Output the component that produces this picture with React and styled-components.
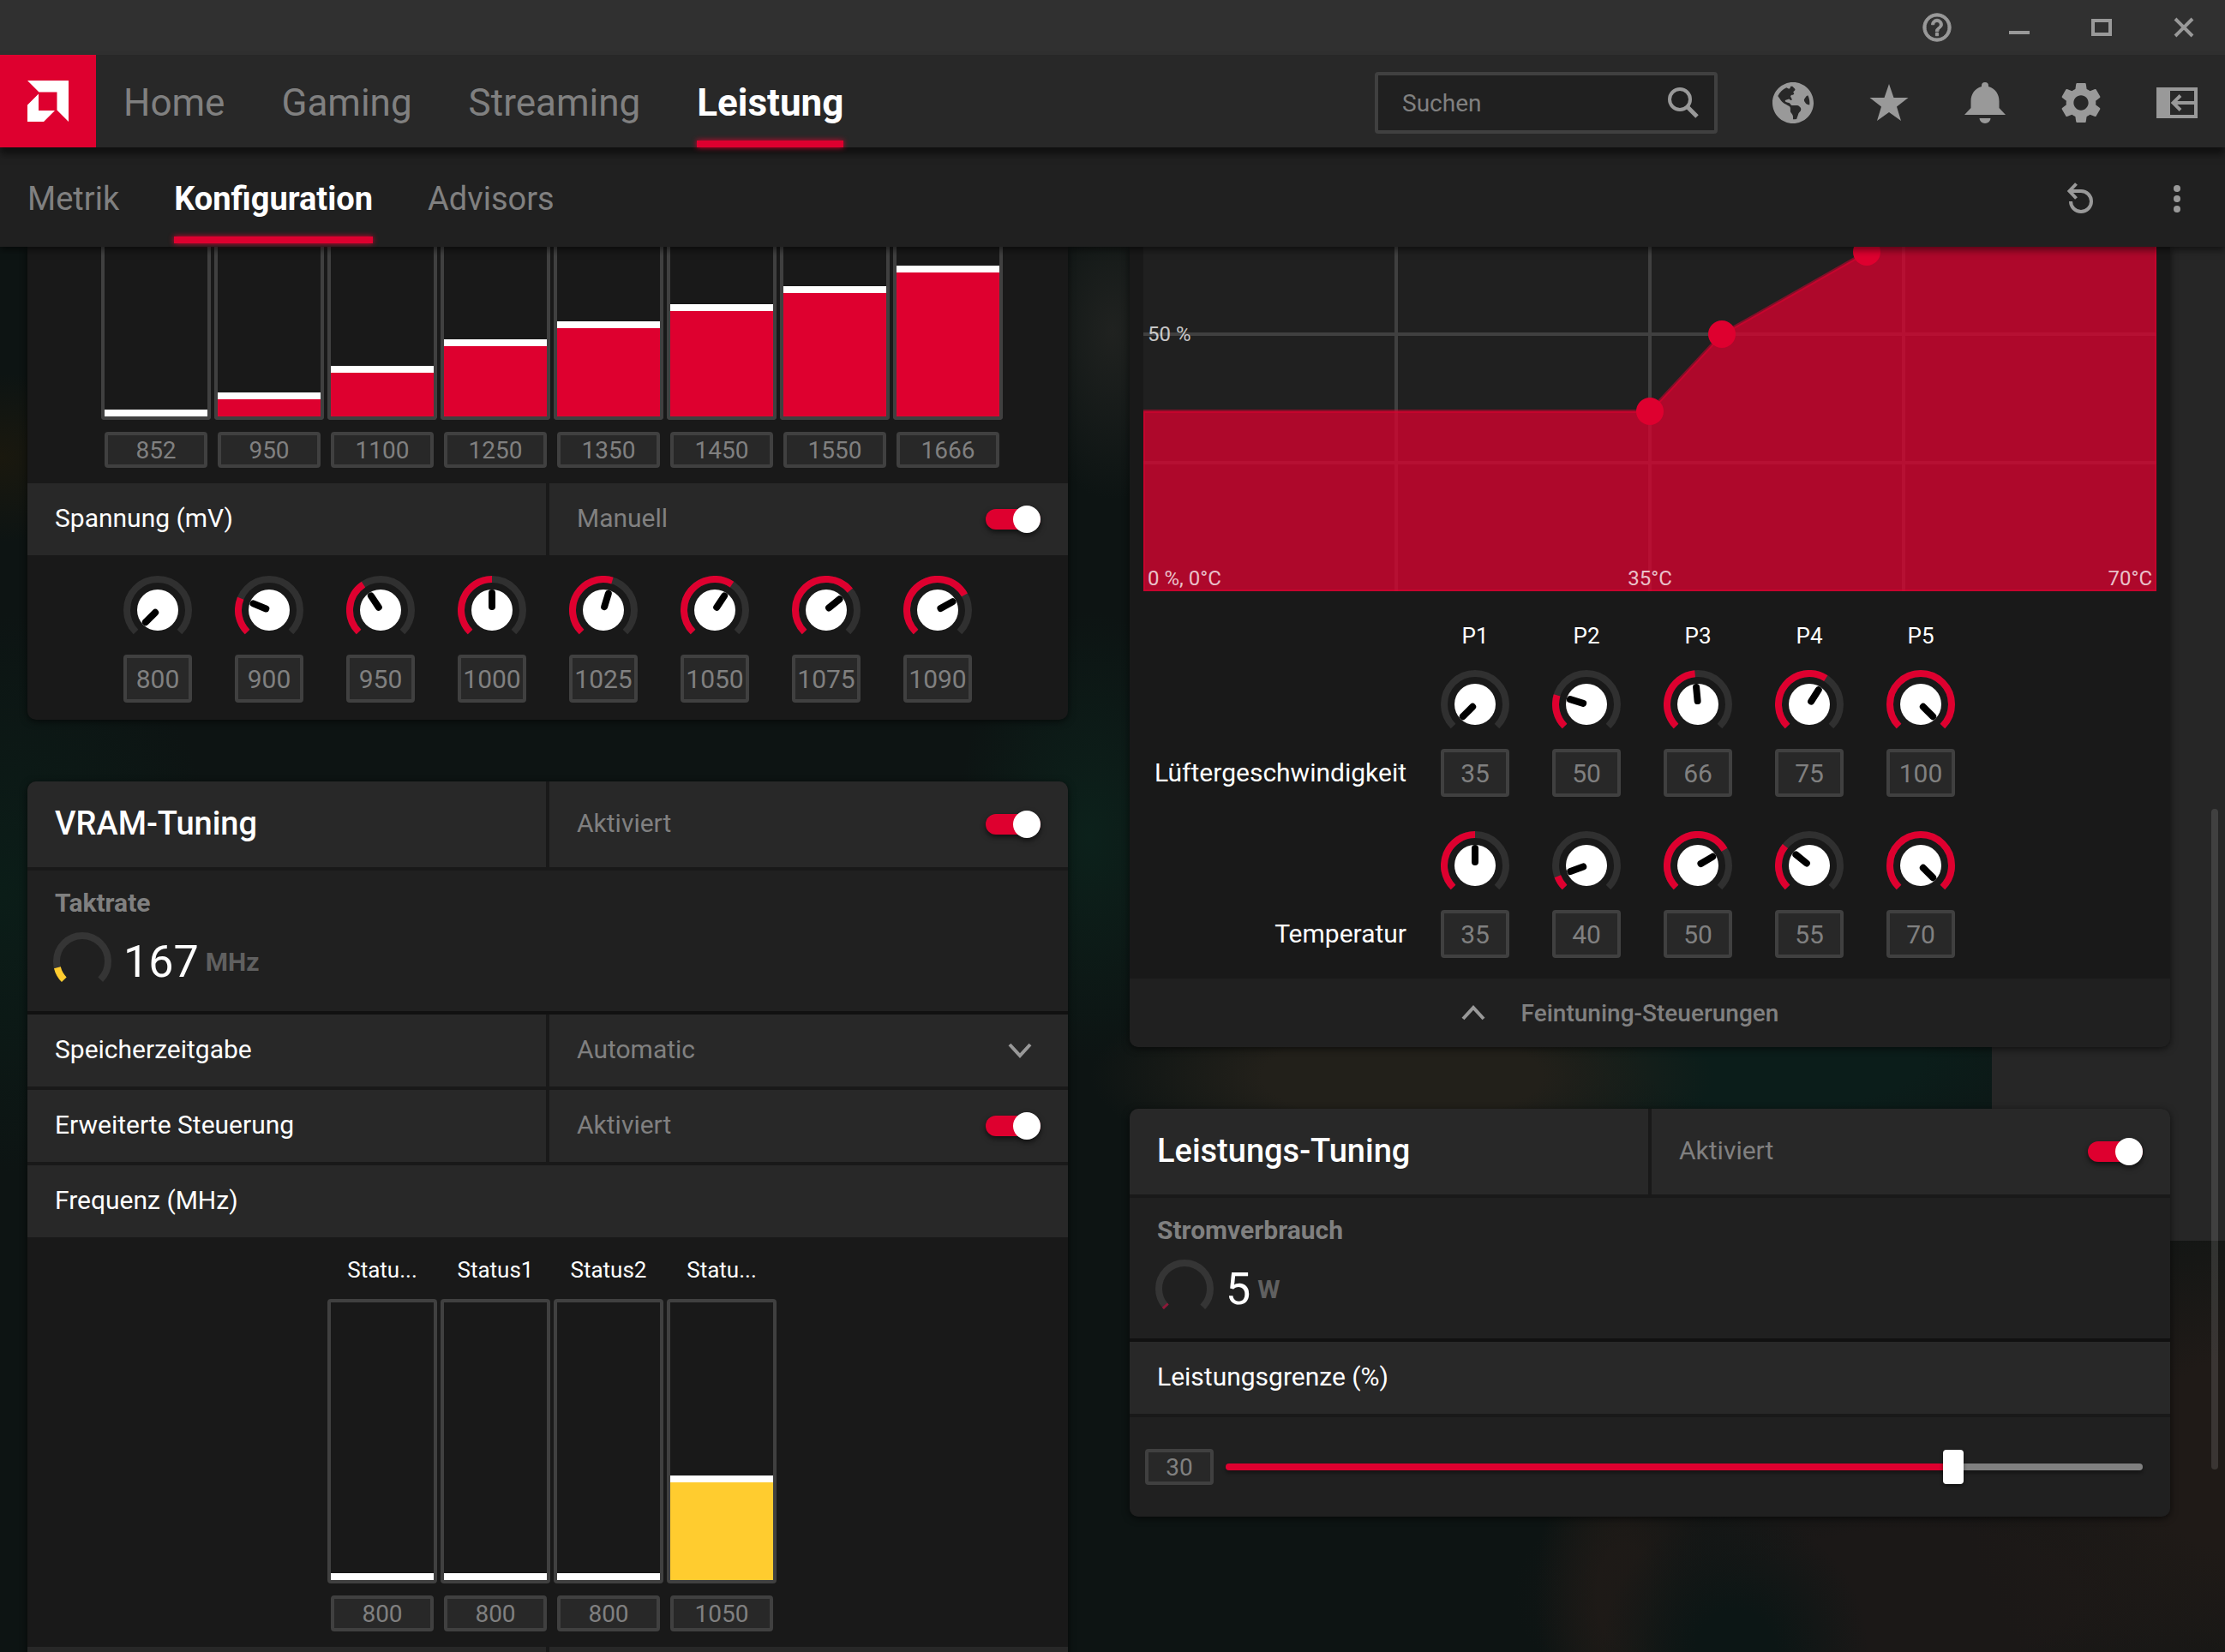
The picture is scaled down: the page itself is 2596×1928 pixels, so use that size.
import React, { useState } from "react";
import styled, { createGlobalStyle } from "styled-components";
import { FaGlobeAmericas } from "react-icons/fa";
import { MdHelpOutline, MdSettings } from "react-icons/md";

const RED = "#de002f";
const YELLOW = "#ffcc2f";

const GlobalStyle = createGlobalStyle`
  * {
    box-sizing: border-box;
  }
  body {
    margin: 0;
    background: #0e1514;
    color: #fff;
    font-family: Roboto, "Liberation Sans", sans-serif;
    font-size: 30px;
  }
  button, input, select {
    font: inherit;
    color: inherit;
    border: 0;
    padding: 0;
    margin: 0;
    background: none;
  }
`;

const Page = styled.div`
  height: 100vh;
  display: flex;
  flex-direction: column;
  overflow: hidden;
`;

const TitleBar = styled.div`
  height: 64px;
  flex: none;
  display: flex;
  justify-content: flex-end;
  align-items: center;
  gap: 48px;
  padding-right: 24px;
  background: #303030;
`;

const IconButton = styled.button`
  width: 48px;
  height: 48px;
  display: flex;
  align-items: center;
  justify-content: center;
  color: #999;
`;

const NavBar = styled.header`
  height: 108px;
  flex: none;
  display: flex;
  align-items: center;
  background: #282828;
  position: relative;
  z-index: 3;
  box-shadow: 0 8px 8px rgba(0, 0, 0, 0.5);
`;

const Logo = styled.a`
  width: 112px;
  height: 100%;
  display: flex;
  align-items: center;
  justify-content: center;
  background: ${RED};
`;

const NavLinks = styled.nav`
  height: 100%;
  flex: 1;
  display: flex;
  gap: ${(props) => (props.$small ? 64 : 66)}px;
  padding-left: 32px;
`;

const NavLink = styled.a`
  position: relative;
  display: flex;
  align-items: center;
  padding-top: 4px;
  color: ${(props) => (props.$active ? "#fff" : "#808080")};
  font-size: ${(props) => (props.$small ? 38 : 44)}px;
  font-weight: ${(props) => (props.$active ? 700 : 400)};
  text-decoration: none;

  &::after {
    content: "";
    display: ${(props) => (props.$active ? "block" : "none")};
    position: absolute;
    left: 0;
    right: 0;
    bottom: ${(props) => (props.$small ? 4 : 0)}px;
    height: 8px;
    background: ${RED};
    box-shadow: 0 0 6px ${RED};
  }
`;

const SearchBox = styled.label`
  width: 400px;
  height: 72px;
  margin-top: 4px;
  display: flex;
  align-items: center;
  padding: 0 18px 0 28px;
  border: 4px solid #404040;
  border-radius: 4px;
  background: #202020;
  color: #999;

  input {
    flex: 1;
    min-width: 0;
    font-size: 28px;
    outline: none;
  }
  input::placeholder {
    color: #808080;
  }
`;

const NavIcons = styled.div`
  display: flex;
  gap: 64px;
  margin-top: 4px;
  padding: 0 32px 0 64px;
`;

const SubNav = styled.div`
  height: 116px;
  flex: none;
  display: flex;
  align-items: center;
  background: #202020;
  position: relative;
  z-index: 2;
  box-shadow: 0 4px 8px rgba(0, 0, 0, 0.5);
`;

const Content = styled.main`
  flex: 1;
  min-height: 0;
  position: relative;
  display: grid;
  grid-template-columns: 1fr 1fr;
  align-items: start;
  gap: 72px;
  padding: 0 64px 0 32px;
  overflow: hidden;
  background:
    linear-gradient(#262626, #262626) right top / 64px 1160px no-repeat,
    linear-gradient(#262626, #262626) right 900px / 272px 260px no-repeat,
    radial-gradient(ellipse 6% 10% at 78% 100%, #0c1615 30%, transparent),
    radial-gradient(ellipse 12% 22% at 100% 86%, #1f1a17 30%, transparent),
    radial-gradient(ellipse 18% 12% at 86% 96%, #1b1817 40%, transparent),
    radial-gradient(ellipse 4% 12% at 73% 96%, #1f1b17 30%, transparent),
    radial-gradient(ellipse 14% 7% at 63% 59%, #22201a 45%, transparent),
    radial-gradient(ellipse 16% 8% at 80% 58%, #0b1d1a 40%, transparent),
    radial-gradient(ellipse 6% 16% at 49% 42%, #0c211b, transparent),
    radial-gradient(ellipse 4% 12% at 50% 6%, #202220, transparent),
    radial-gradient(ellipse 5% 6% at 0% 15%, #1a180e, transparent),
    radial-gradient(ellipse 10% 20% at 0% 46%, #0b1d18, transparent),
    #0d1413;
`;

const ScrollThumb = styled.div`
  position: absolute;
  right: 8px;
  top: 40%;
  width: 8px;
  height: 47%;
  border-radius: 4px;
  background: rgba(255, 255, 255, 0.12);
`;

const Column = styled.div`
  display: flex;
  flex-direction: column;
  gap: 72px;
`;

const Card = styled.section`
  display: flex;
  flex-direction: column;
  background: #191919;
  border-radius: ${(props) => (props.$cut ? "0 0 10px 10px" : "10px")};
  overflow: hidden;
  box-shadow: 0 2px 8px rgba(0, 0, 0, 0.6);
`;

const Row = styled.div`
  display: grid;
  grid-template-columns: ${(props) => (props.$single ? "1fr" : "1fr 1fr")};
  gap: 4px;
  height: ${(props) => (props.$head ? 100 : 84)}px;
  border-bottom: ${(props) => (props.$line ? "4px solid #191919" : "0")};
  box-sizing: content-box;
`;

const Cell = styled.div`
  display: flex;
  align-items: center;
  justify-content: space-between;
  padding: 0 32px;
  background: #282828;
`;

const CellText = styled.span`
  padding-bottom: 4px;
  color: ${(props) => (props.$muted ? "#808080" : "#fff")};
`;

const CardTitle = styled.h2`
  margin: 0;
  padding-bottom: 2px;
  font-size: 38px;
  font-weight: 500;
`;

const Switch = styled.input`
  appearance: none;
  display: grid;
  align-items: center;
  width: 64px;
  height: 32px;
  filter: drop-shadow(0 3px 3px rgba(0, 0, 0, 0.6));

  &::before,
  &::after {
    content: "";
    grid-area: 1 / 1;
  }
  &::before {
    height: 24px;
    border-radius: 12px;
    background: ${RED};
  }
  &::after {
    justify-self: end;
    width: 32px;
    height: 32px;
    border-radius: 50%;
    background: #fff;
  }
  &:not(:checked)::before {
    background: #555;
  }
  &:not(:checked)::after {
    justify-self: start;
  }
`;

const Select = styled.select`
  appearance: none;
  flex: 1;
  padding-bottom: 4px;
  color: #808080;
  outline: none;
`;

const ChevronBox = styled.span`
  width: 48px;
  display: flex;
  justify-content: center;
  pointer-events: none;
`;

const Metric = styled.div`
  padding: 20px 32px 26px;
  background: #202020;
  border-bottom: 4px solid #111;
`;

const MetricName = styled.div`
  line-height: 36px;
  margin-bottom: 18px;
  font-weight: 700;
  color: #808080;
`;

const MetricLine = styled.div`
  display: flex;
  align-items: center;
  height: 64px;

  svg {
    overflow: visible;
    margin-right: 16px;
  }
`;

const MetricValue = styled.span`
  font-size: 52px;
  margin-right: 8px;
`;

const MetricUnit = styled.span`
  font-size: 30px;
  font-weight: 700;
  color: #606060;
`;

const Bars = styled.div`
  display: flex;
  justify-content: center;
  gap: 4px;
  padding: ${(props) => (props.$cut ? 0 : 22)}px 0 18px 10px;
`;

const BarColumn = styled.div`
  width: 128px;
  display: flex;
  flex-direction: column;
  align-items: center;
`;

const BarLabel = styled.div`
  height: 32px;
  margin-bottom: 18px;
  line-height: 32px;
  font-size: 26px;
`;

const Track = styled.div`
  width: 100%;
  height: ${(props) => (props.$cut ? 202 : 332)}px;
  margin-bottom: 14px;
  display: flex;
  flex-direction: column;
  justify-content: flex-end;
  border: 4px solid #404040;
  border-top-width: ${(props) => (props.$cut ? 0 : 4)}px;
  border-radius: ${(props) => (props.$cut ? "0 0 4px 4px" : "4px")};
`;

const Fill = styled.div`
  border-top: 8px solid #fff;
  background: ${(props) => props.$color};
  box-sizing: content-box;
`;

const ValueInput = styled.input`
  width: ${(props) => (props.$wide ? 120 : 80)}px;
  height: ${(props) => (props.$low ? 42 : 56)}px;
  border: 4px solid #404040;
  border-radius: 4px;
  background: #282828;
  color: #808080;
  font-size: ${(props) => (props.$low ? 28 : 30)}px;
  text-align: center;
  flex: none;
  outline: none;
`;

const Knobs = styled.div`
  display: flex;
  justify-content: center;
  gap: 50px;
`;

const VoltageKnobs = styled(Knobs)`
  padding: 24px 0 20px;
`;

const KnobColumn = styled.div`
  display: flex;
  flex-direction: column;
  gap: 12px;
`;

const FanSettings = styled.div`
  display: flex;
  flex-direction: column;
  padding: 36px 16px 24px;
`;

const FanRow = styled.div`
  display: flex;
  align-items: flex-end;
  margin-bottom: ${(props) => props.$space}px;
`;

const FanLabel = styled.div`
  width: 307px;
  margin-right: 40px;
  line-height: 56px;
  text-align: right;
`;

const PointLabel = styled.div`
  width: 80px;
  line-height: 32px;
  font-size: 26px;
  text-align: center;
`;

const ChartBox = styled.div`
  padding: 0 16px;

  svg {
    display: block;
    width: 100%;
    background: #202020;
  }
  text {
    font-size: 24px;
    fill: rgba(255, 255, 255, 0.75);
  }
`;

const FooterButton = styled.button`
  height: 80px;
  display: grid;
  grid-template-columns: 1fr auto 1fr;
  align-items: center;
  background: #202020;
  color: #808080;
  font-size: 28px;
  font-weight: 500;

  ${ChevronBox} {
    justify-self: end;
    margin-right: 32px;
  }
`;

const SliderRow = styled.div`
  height: 116px;
  display: flex;
  align-items: center;
  gap: 14px;
  padding: 0 32px 0 18px;
  background: #202020;
`;

const Slider = styled.input`
  appearance: none;
  flex: 1;
  height: 8px;
  border-radius: 4px;
  box-shadow: 0 3px 4px rgba(0, 0, 0, 0.4);

  &::-webkit-slider-thumb {
    appearance: none;
    width: 24px;
    height: 40px;
    border-radius: 4px;
    background: #fff;
    box-shadow: 0 2px 4px rgba(0, 0, 0, 0.5);
  }
`;

const Chevron = ({ up }) => (
  <ChevronBox>
    <svg width="28" height="18" viewBox="0 0 28 18" fill="none" stroke="#999" strokeWidth="4">
      <path d={up ? "M2 16 14 3 26 16" : "M2 2 14 15 26 2"} />
    </svg>
  </ChevronBox>
);

// arcs start at the lower left and run clockwise over 270 degrees
const arc = (c, r, part) => {
  const point = (deg) => {
    const rad = (deg * Math.PI) / 180;
    return `${c + r * Math.cos(rad)} ${c + r * Math.sin(rad)}`;
  };
  const sweep = 270 * part;
  return `M${point(135)}A${r} ${r} 0 ${sweep > 180 ? 1 : 0} 1 ${point(135 + sweep)}`;
};

const Knob = ({ part }) => (
  <svg width="80" height="80" viewBox="0 0 80 80" fill="none">
    <path d={arc(40, 36, 1)} stroke="#303030" strokeWidth="8" />
    {part > 0 && <path d={arc(40, 36, part)} stroke={RED} strokeWidth="8" />}
    <circle cx="40" cy="40" r="24" fill="#fff" />
    <path
      d="M40 36V20"
      stroke="#000"
      strokeWidth="8"
      strokeLinecap="round"
      transform={`rotate(${-135 + 270 * part} 40 40)`}
    />
  </svg>
);

const KnobField = ({ name, value, part }) => {
  const [text, setText] = useState(value);
  return (
    <KnobColumn>
      <Knob part={part} />
      <ValueInput aria-label={name} value={text} onChange={(e) => setText(e.target.value)} />
    </KnobColumn>
  );
};

const MetricPanel = ({ name, value, unit, part, color }) => (
  <Metric>
    <MetricName>{name}</MetricName>
    <MetricLine>
      <svg width="64" height="64" viewBox="0 0 64 64" fill="none" strokeWidth="8">
        <path d={arc(32, 30, 1)} stroke="#353535" />
        <path d={arc(32, 30, part)} stroke={color} />
      </svg>
      <MetricValue>{value}</MetricValue>
      <MetricUnit>{unit}</MetricUnit>
    </MetricLine>
  </Metric>
);

const SwitchCell = ({ text, label }) => {
  const [on, setOn] = useState(true);
  return (
    <Cell as="label">
      <CellText $muted>{text}</CellText>
      <Switch type="checkbox" aria-label={label} checked={on} onChange={() => setOn(!on)} />
    </Cell>
  );
};

const BarChart = ({ bars, min, max, color, cut }) => (
  <Bars $cut={cut}>
    {bars.map((bar, index) => (
      <BarColumn key={index}>
        {bar.label && <BarLabel>{bar.label}</BarLabel>}
        <Track $cut={cut}>
          <Fill $color={color} style={{ height: Math.round(((bar.value - min) / (max - min)) * 316) }} />
        </Track>
        <ValueInput $wide $low aria-label={`Frequenz ${index}`} defaultValue={bar.value} />
      </BarColumn>
    ))}
  </Bars>
);

const gpuStates = [852, 950, 1100, 1250, 1350, 1450, 1550, 1666].map((value) => ({ value }));
const voltages = [800, 900, 950, 1000, 1025, 1050, 1075, 1090];
const vramStates = [
  { label: "Statu...", value: 800 },
  { label: "Status1", value: 800 },
  { label: "Status2", value: 800 },
  { label: "Statu...", value: 1050 },
];
const fanSpeeds = [
  { value: 35, part: 0 },
  { value: 50, part: 0.23 },
  { value: 66, part: 0.48 },
  { value: 75, part: 0.62 },
  { value: 100, part: 1 },
];
const fanTemps = [
  { value: 35, part: 0.5 },
  { value: 40, part: 0.09 },
  { value: 50, part: 0.72 },
  { value: 55, part: 0.31 },
  { value: 70, part: 1 },
];

const FanCurve = () => (
  <ChartBox>
    <svg viewBox="0 0 1182 402">
      <path d="M295 0V402M591 0V402M887 0V402M0 102H1182M0 252H1182" stroke="#404040" strokeWidth="4" />
      <path
        d="M0 192H591L675 102 844 6 929 -48 1182 -198V402H0Z"
        fill={RED}
        fillOpacity="0.75"
        stroke={RED}
        strokeOpacity="0.5"
        strokeWidth="4"
      />
      <circle cx="591" cy="192" r="16" fill={RED} />
      <circle cx="675" cy="102" r="16" fill={RED} />
      <circle cx="844" cy="6" r="16" fill={RED} />
      <text x="5" y="110">50 %</text>
      <text x="5" y="395">0 %, 0°C</text>
      <text x="591" y="395" textAnchor="middle">35°C</text>
      <text x="1177" y="395" textAnchor="end">70°C</text>
    </svg>
  </ChartBox>
);

const Header = () => (
  <>
    <TitleBar>
      <IconButton aria-label="Hilfe">
        <MdHelpOutline size={34} viewBox="1.5 1.5 21 21" stroke="currentColor" strokeWidth={0.6} />
      </IconButton>
      <IconButton aria-label="Minimieren">
        <svg width="24" height="24" viewBox="0 0 24 24" fill="currentColor">
          <path d="M0 16h24v4H0z" />
        </svg>
      </IconButton>
      <IconButton aria-label="Maximieren">
        <svg width="24" height="20" viewBox="0 0 24 20" fill="none" stroke="currentColor" strokeWidth="4">
          <path d="M2 2h20v16H2z" />
        </svg>
      </IconButton>
      <IconButton aria-label="Schließen">
        <svg width="24" height="24" viewBox="0 0 24 24" stroke="currentColor" strokeWidth="4">
          <path d="M2 2 22 22M22 2 2 22" />
        </svg>
      </IconButton>
    </TitleBar>
    <NavBar>
      <Logo href="#" aria-label="AMD">
        <svg width="48" height="48" viewBox="0 0 48 48" fill="#fff">
          <path d="M0 0H48V48L34.5 34.5V13.5H13.5Z" />
          <path d="M13 15.5V35H32L19 48H0V28.5Z" />
        </svg>
      </Logo>
      <NavLinks>
        <NavLink href="#">Home</NavLink>
        <NavLink href="#">Gaming</NavLink>
        <NavLink href="#">Streaming</NavLink>
        <NavLink href="#" $active>Leistung</NavLink>
      </NavLinks>
      <SearchBox>
        <input type="text" placeholder="Suchen" aria-label="Suchen" />
        <svg width="36" height="36" viewBox="0 0 36 36" fill="none" stroke="currentColor" strokeWidth="4">
          <circle cx="14" cy="14" r="12" />
          <path d="M22.5 22.5 34 34" strokeWidth="5" />
        </svg>
      </SearchBox>
      <NavIcons>
        <IconButton aria-label="Web">
          <FaGlobeAmericas size={48} viewBox="0 8 496 496" />
        </IconButton>
        <IconButton aria-label="Favoriten">
          <svg width="46" height="44" viewBox="0 0 46 44" fill="currentColor">
            <path d="M23 0 28.5 16H45.5L32 26.5 37 43 23 33 9 43 14 26.5.5 16H17.5Z" />
          </svg>
        </IconButton>
        <IconButton aria-label="Benachrichtigungen">
          <svg width="48" height="48" viewBox="0 0 48 48" fill="currentColor">
            <path d="M24 0a4 4 0 0 1 4 4v1c8 2 12.5 9 12.5 17v8L48 38H0l7.5-8v-8C7.5 14 12 7 20 5V4a4 4 0 0 1 4-4z" />
            <path d="M17.5 42h13a6.5 6 0 0 1-13 0z" />
          </svg>
        </IconButton>
        <IconButton aria-label="Einstellungen">
          <MdSettings size={48} viewBox="2 2 20 20" />
        </IconButton>
        <IconButton aria-label="Seitenleiste">
          <svg width="48" height="36" viewBox="0 0 48 36" fill="none" stroke="currentColor" strokeWidth="4">
            <path d="M2 2H46V34H2Z" />
            <path d="M8 0V36" strokeWidth="16" />
            <path d="M46 18H20M28 9.5 19.5 18 28 26.5" />
          </svg>
        </IconButton>
      </NavIcons>
    </NavBar>
    <SubNav>
      <NavLinks $small>
        <NavLink href="#" $small>Metrik</NavLink>
        <NavLink href="#" $small $active>Konfiguration</NavLink>
        <NavLink href="#" $small>Advisors</NavLink>
      </NavLinks>
      <NavIcons>
        <IconButton aria-label="Zurücksetzen">
          <svg width="34" height="38" viewBox="0 0 34 38" fill="none" stroke="currentColor" strokeWidth="4">
            <path d="M5 22A12 12 0 1 0 17 10H4" />
            <path d="M11.5 1.5 3.5 10l8 8.5" />
          </svg>
        </IconButton>
        <IconButton aria-label="Mehr">
          <svg width="8" height="32" viewBox="0 0 8 32" fill="currentColor">
            <circle cx="4" cy="4" r="4" />
            <circle cx="4" cy="16" r="4" />
            <circle cx="4" cy="28" r="4" />
          </svg>
        </IconButton>
      </NavIcons>
    </SubNav>
  </>
);

const App = () => {
  const [limit, setLimit] = useState(30);
  const limitPart = limit + 50;

  return (
    <Page>
      <GlobalStyle />
      <Header />
      <Content>
        <Column>
          <Card $cut>
            <BarChart bars={gpuStates} min={852} max={2383} color={RED} cut />
            <Row>
              <Cell>
                <CellText>Spannung (mV)</CellText>
              </Cell>
              <SwitchCell text="Manuell" label="Spannung (mV)" />
            </Row>
            <VoltageKnobs>
              {voltages.map((value) => (
                <KnobField key={value} name={`Spannung ${value}`} value={value} part={(value - 800) / 400} />
              ))}
            </VoltageKnobs>
          </Card>

          <Card>
            <Row $head $line>
              <Cell>
                <CardTitle>VRAM-Tuning</CardTitle>
              </Cell>
              <SwitchCell text="Aktiviert" label="VRAM-Tuning" />
            </Row>
            <MetricPanel name="Taktrate" value="167" unit="MHz" part={0.115} color={YELLOW} />
            <Row $line>
              <Cell>
                <CellText as="label" htmlFor="timing">Speicherzeitgabe</CellText>
              </Cell>
              <Cell>
                <Select id="timing">
                  <option>Automatic</option>
                </Select>
                <Chevron />
              </Cell>
            </Row>
            <Row $line>
              <Cell>
                <CellText>Erweiterte Steuerung</CellText>
              </Cell>
              <SwitchCell text="Aktiviert" label="Erweiterte Steuerung" />
            </Row>
            <Row $single>
              <Cell>
                <CellText>Frequenz (MHz)</CellText>
              </Cell>
            </Row>
            <BarChart bars={vramStates} min={800} max={1493} color={YELLOW} />
            <Row>
              <Cell />
              <Cell />
            </Row>
          </Card>
        </Column>

        <Column>
          <Card $cut>
            <FanCurve />
            <FanSettings>
              <FanRow $space={24}>
                <FanLabel as="span" />
                <Knobs>
                  {["P1", "P2", "P3", "P4", "P5"].map((point) => (
                    <PointLabel key={point}>{point}</PointLabel>
                  ))}
                </Knobs>
              </FanRow>
              <FanRow $space={40}>
                <FanLabel>Lüftergeschwindigkeit</FanLabel>
                <Knobs>
                  {fanSpeeds.map((item, index) => (
                    <KnobField key={index} name={`Lüftergeschwindigkeit P${index + 1}`} {...item} />
                  ))}
                </Knobs>
              </FanRow>
              <FanRow $space={0}>
                <FanLabel>Temperatur</FanLabel>
                <Knobs>
                  {fanTemps.map((item, index) => (
                    <KnobField key={index} name={`Temperatur P${index + 1}`} {...item} />
                  ))}
                </Knobs>
              </FanRow>
            </FanSettings>
            <FooterButton>
              <Chevron up />
              <span>Feintuning-Steuerungen</span>
            </FooterButton>
          </Card>

          <Card>
            <Row $head $line>
              <Cell>
                <CardTitle>Leistungs-Tuning</CardTitle>
              </Cell>
              <SwitchCell text="Aktiviert" label="Leistungs-Tuning" />
            </Row>
            <MetricPanel name="Stromverbrauch" value="5" unit="W" part={0.02} color="#8e1838" />
            <Row $single $line>
              <Cell>
                <CellText as="label" htmlFor="limit">Leistungsgrenze (%)</CellText>
              </Cell>
            </Row>
            <SliderRow>
              <ValueInput
                $low
                aria-label="Leistungsgrenze Wert"
                value={limit}
                onChange={(e) => setLimit(Number(e.target.value) || 0)}
              />
              <Slider
                id="limit"
                type="range"
                min="-50"
                max="50"
                value={limit}
                onChange={(e) => setLimit(Number(e.target.value))}
                style={{ background: `linear-gradient(to right, ${RED} ${limitPart}%, #808080 ${limitPart}%)` }}
              />
            </SliderRow>
          </Card>
        </Column>
        <ScrollThumb />
      </Content>
    </Page>
  );
};

export default App;
